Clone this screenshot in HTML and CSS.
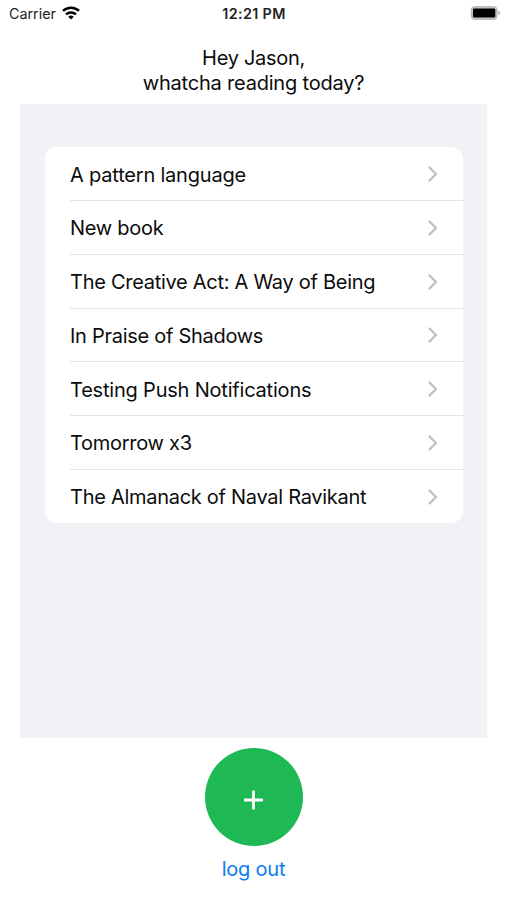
FILE: index.html
```html
<!DOCTYPE html>
<html lang="en">
<head>
<meta charset="utf-8">
<title>Reading</title>
<link rel="stylesheet" href="styles.css">
</head>
<body>
<header class="status">
  <div class="carrier"><span class="carrier-name">Carrier</span>
    <svg class="wifi" width="18" height="14" viewBox="0 0 18 14" fill="none" stroke="#000" stroke-width="2.5"><path d="M1 4.9a11.5 11.5 0 0 1 16 0M4 8.4a7.2 7.2 0 0 1 10 0"/><path d="M9 13.6 6.2 10.8a4 4 0 0 1 5.6 0z" fill="#000" stroke="none"/></svg>
  </div>
  <div class="time">12:21 PM</div>
  <svg class="battery" width="31" height="14" viewBox="0 0 31 14"><rect x=".8" y=".3" width="26.7" height="13.4" rx="4" fill="#c6c6c6"/><rect x="1.3" y=".8" width="25.7" height="12.4" rx="3.5" fill="none" stroke="#b4b4b4"/><rect x="3" y="2.5" width="22.3" height="9" rx="1.3"/><path d="M28.4 4.7q1.9.6 1.9 2.3t-1.9 2.3z" fill="#b4b4b4"/></svg>
</header>
<h1 class="greeting">Hey Jason,<br><span class="question">whatcha reading today?</span></h1>
<main class="panel">
  <ul class="books">
    <li><span class="wide">A pattern language</span><svg class="chevron" viewBox="0 0 10 16"><path d="m1.5 1.5 6.5 6.5-6.5 6.5"/></svg></li>
    <li><span>New book</span><svg class="chevron" viewBox="0 0 10 16"><path d="m1.5 1.5 6.5 6.5-6.5 6.5"/></svg></li>
    <li><span>The Creative Act: A Way of Being</span><svg class="chevron" viewBox="0 0 10 16"><path d="m1.5 1.5 6.5 6.5-6.5 6.5"/></svg></li>
    <li><span>In Praise of Shadows</span><svg class="chevron" viewBox="0 0 10 16"><path d="m1.5 1.5 6.5 6.5-6.5 6.5"/></svg></li>
    <li><span class="wide">Testing Push Notifications</span><svg class="chevron" viewBox="0 0 10 16"><path d="m1.5 1.5 6.5 6.5-6.5 6.5"/></svg></li>
    <li><span>Tomorrow x3</span><svg class="chevron" viewBox="0 0 10 16"><path d="m1.5 1.5 6.5 6.5-6.5 6.5"/></svg></li>
    <li><span>The Almanack of Naval Ravikant</span><svg class="chevron" viewBox="0 0 10 16"><path d="m1.5 1.5 6.5 6.5-6.5 6.5"/></svg></li>
  </ul>
</main>
<footer class="actions">
  <button class="add" aria-label="Add book"><svg width="20" height="20" viewBox="0 0 20 20"><path d="M9.5.5v19M0 10h19" stroke="#fff" stroke-width="2.8"/></svg></button>
  <a class="logout">log out</a>
</footer>
</body>
</html>
```
FILE: styles.css
```css
* { box-sizing: border-box; }
body { margin: 0; width: 507px; height: 900px; background: #fff; color: #0c0c0c; font-family: Inter, "Liberation Sans", sans-serif; overflow: hidden; }
.status { display: grid; grid-template-columns: 1fr auto 1fr; align-items: center; height: 27px; padding: 0 6px 0 9px; font-size: 14.3px; color: #222; }
.carrier { display: flex; align-items: center; gap: 6px; }
.wifi { margin-bottom: 1px; }
.time { font-weight: 600; letter-spacing: .38px; margin-left: -2px; }
.battery { justify-self: end; margin-bottom: 1px; }
.greeting { margin: 19px 0 0; height: 58px; font-size: 20px; font-weight: 400; line-height: 25px; text-align: center; letter-spacing: -.3px; }
.question { letter-spacing: -.2px; }
.panel { margin: 0 20px; height: 634px; padding: 43px 24px 0 25px; background: #f1f1f6; }
.books { margin: 0; padding: 0; list-style: none; background: #fff; border-radius: 12px; overflow: hidden; }
.books li { display: flex; align-items: center; justify-content: space-between; height: 53.75px; margin-left: 25px; padding: 2px 25px 0 0; font-size: 20px; letter-spacing: -.28px; border-bottom: 1px solid #e4e4e6; }
.books li:first-child { height: 54px; }
.books li:last-child { height: 53px; border-bottom: 0; }
.books .wide { letter-spacing: -.2px; }
.chevron { width: 10px; height: 16px; margin-top: -1px; fill: none; stroke: #bfbfc1; stroke-width: 2.3; stroke-linecap: round; stroke-linejoin: round; }
.actions { display: flex; flex-direction: column; align-items: center; padding-top: 10px; }
.add { display: grid; place-items: center; width: 98px; height: 98px; padding: 5px 0 0; border: 0; border-radius: 50%; background: #1eb955; }
.logout { margin-top: 11px; font-size: 20px; line-height: 25px; letter-spacing: -.2px; color: #087cf5; }
```
